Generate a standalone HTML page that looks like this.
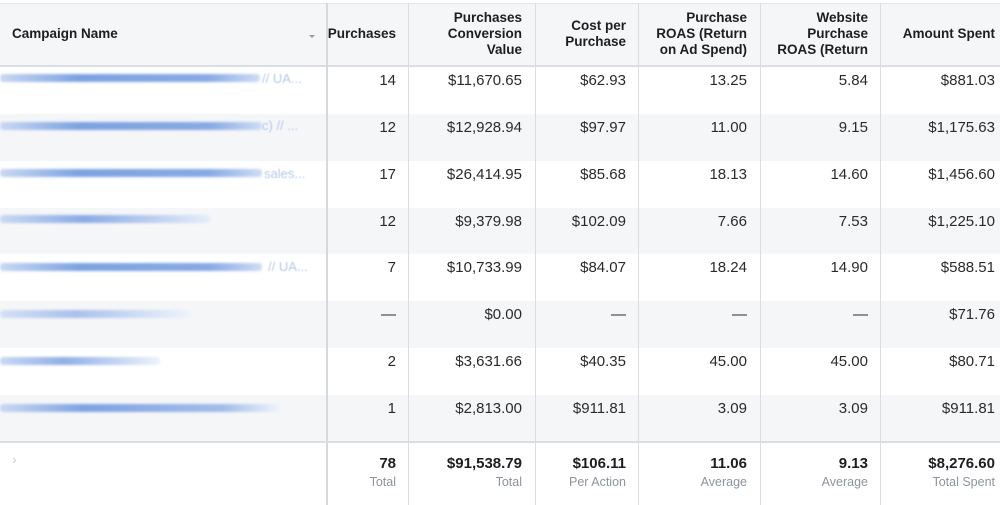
<!DOCTYPE html>
<html><head><meta charset="utf-8"><style>
*{margin:0;padding:0;box-sizing:border-box}
body{width:1000px;height:505px;overflow:hidden;background:#fff;font-family:"Liberation Sans",Arial,sans-serif;position:relative;color:#1c1e21}
.hdr{position:absolute;left:0;top:3px;width:1000px;height:64px;background:#f5f6f7;border-top:1px solid #e4e6e9;border-bottom:2px solid #dadde1}
.row{position:absolute;left:0;width:1000px}
.g{background:#f5f6f8}
.c{position:absolute;top:0;text-align:right;font-size:15px;color:#2a2a2a}
.vl{position:absolute;top:3px;bottom:0;width:1px;background:#dadde1}
.h{position:absolute;font-size:13.5px;font-weight:bold;text-align:right;line-height:16px;color:#1c1e21}
.bar{position:absolute;height:8px;border-radius:3px;filter:blur(1.3px)}
.frag{position:absolute;font-size:13px;color:#b6c8ea;filter:blur(0.4px)}
.ft{position:absolute;left:0;top:441px;width:1000px;height:64px;border-top:2px solid #dadde1;background:#fff}
.fb{position:absolute;top:12px;font-size:15px;font-weight:bold;text-align:right;color:#1c1e21}
.fl{position:absolute;top:32px;font-size:12.5px;color:#8d949e;text-align:right}
</style></head><body>
<div class="hdr"></div>
<div class="h" style="left:12px;top:26px;text-align:left">Campaign Name</div>
<div style="position:absolute;left:309px;top:35px;width:0;height:0;border-left:3px solid transparent;border-right:3px solid transparent;border-top:3px solid #999"></div>
<div class="h" style="left:326px;width:70px;top:26px">Purchases</div>
<div class="h" style="left:408px;width:114px;top:10px">Purchases<br>Conversion<br>Value</div>
<div class="h" style="left:535px;width:91px;top:18px">Cost per<br>Purchase</div>
<div class="h" style="left:638px;width:109px;top:10px">Purchase<br>ROAS (Return<br>on Ad Spend)</div>
<div class="h" style="left:760px;width:108px;top:10px">Website<br>Purchase<br>ROAS (Return</div>
<div class="h" style="left:880px;width:115px;top:26px">Amount Spent</div>

<div class="row" style="top:67px;height:47px"></div>
<div class="row g" style="top:114px;height:47px"></div>
<div class="row" style="top:161px;height:47px"></div>
<div class="row g" style="top:208px;height:46px"></div>
<div class="row" style="top:254px;height:47px"></div>
<div class="row g" style="top:301px;height:47px"></div>
<div class="row" style="top:348px;height:47px"></div>
<div class="row g" style="top:395px;height:46px"></div>

<div class="vl" style="left:326px;width:2px;background:#d5d8dc"></div>
<div class="vl" style="left:408px"></div>
<div class="vl" style="left:535px"></div>
<div class="vl" style="left:638px"></div>
<div class="vl" style="left:760px"></div>
<div class="vl" style="left:880px"></div>

<div class="bar" style="left:0;top:74px;width:260px;background:linear-gradient(90deg,#c9d8f3,#7da2e2 30%,#88a9e4 80%,#cfdcf4)"></div><div class="frag" style="left:262px;top:71px">// UA...</div>
<div class="bar" style="left:0;top:122px;width:262px;background:linear-gradient(90deg,#c9d8f3,#7da2e2 30%,#88a9e4 80%,#cfdcf4)"></div><div class="frag" style="left:262px;top:118px">c) // ...</div>
<div class="bar" style="left:0;top:169px;width:262px;background:linear-gradient(90deg,#c9d8f3,#7da2e2 30%,#88a9e4 80%,#cfdcf4)"></div><div class="frag" style="left:264px;top:166px">sales...</div>
<div class="bar" style="left:0;top:215px;width:210px;background:linear-gradient(90deg,#c9d8f3,#8aabe5 40%,#e6edf9)"></div>
<div class="bar" style="left:0;top:263px;width:262px;background:linear-gradient(90deg,#c9d8f3,#7da2e2 30%,#88a9e4 80%,#cfdcf4)"></div><div class="frag" style="left:268px;top:259px">// UA...</div>
<div class="bar" style="left:0;top:310px;width:190px;background:linear-gradient(90deg,#d4e0f5,#a9c1ec 40%,#eef3fb)"></div>
<div class="bar" style="left:0;top:357px;width:160px;background:linear-gradient(90deg,#c9d8f3,#90afe6 40%,#eef3fb)"></div>
<div class="bar" style="left:0;top:404px;width:280px;background:linear-gradient(90deg,#c9d8f3,#7da2e2 30%,#a3bdea 80%,#f0f4fb)"></div>
<div class="bar" style="left:0;top:451px;width:225px;background:linear-gradient(90deg,#c9d8f3,#7da2e2 30%,#f0f4fb)"></div>
<div class="bar" style="left:0;top:497px;width:290px;background:linear-gradient(90deg,#c9d8f3,#7da2e2 30%,#f0f4fb)"></div>

<div id="cells"></div>
<script>
var L=[[326,70],[408,114],[535,91],[638,109],[760,108],[880,115]];
var R=[["14","$11,670.65","$62.93","13.25","5.84","$881.03"],
["12","$12,928.94","$97.97","11.00","9.15","$1,175.63"],
["17","$26,414.95","$85.68","18.13","14.60","$1,456.60"],
["12","$9,379.98","$102.09","7.66","7.53","$1,225.10"],
["7","$10,733.99","$84.07","18.24","14.90","$588.51"],
["—","$0.00","—","—","—","$71.76"],
["2","$3,631.66","$40.35","45.00","45.00","$80.71"],
["1","$2,813.00","$911.81","3.09","3.09","$911.81"]];
var T=[72,119,166,213,259,306,353,400],h="";
R.forEach(function(r,i){r.forEach(function(v,j){h+='<div class="c" style="left:'+L[j][0]+'px;width:'+L[j][1]+'px;top:'+T[i]+'px">'+v+'</div>';});});
document.getElementById("cells").innerHTML=h;
</script>
<div class="ft">
<div style="position:absolute;left:326px;top:0;bottom:0;width:2px;background:#d5d8dc"></div>
<div style="position:absolute;left:408px;top:0;bottom:0;width:1px;background:#dadde1"></div>
<div style="position:absolute;left:535px;top:0;bottom:0;width:1px;background:#dadde1"></div>
<div style="position:absolute;left:638px;top:0;bottom:0;width:1px;background:#dadde1"></div>
<div style="position:absolute;left:760px;top:0;bottom:0;width:1px;background:#dadde1"></div>
<div style="position:absolute;left:880px;top:0;bottom:0;width:1px;background:#dadde1"></div>
<div style="position:absolute;left:12px;top:8px;font-size:14px;color:#ccc">›</div>
<div class="fb" style="left:326px;width:70px">78</div><div class="fl" style="left:326px;width:70px">Total</div>
<div class="fb" style="left:408px;width:114px">$91,538.79</div><div class="fl" style="left:408px;width:114px">Total</div>
<div class="fb" style="left:535px;width:91px">$106.11</div><div class="fl" style="left:535px;width:91px">Per Action</div>
<div class="fb" style="left:638px;width:109px">11.06</div><div class="fl" style="left:638px;width:109px">Average</div>
<div class="fb" style="left:760px;width:108px">9.13</div><div class="fl" style="left:760px;width:108px">Average</div>
<div class="fb" style="left:880px;width:115px">$8,276.60</div><div class="fl" style="left:880px;width:115px">Total Spent</div>
</div>
</body></html>
